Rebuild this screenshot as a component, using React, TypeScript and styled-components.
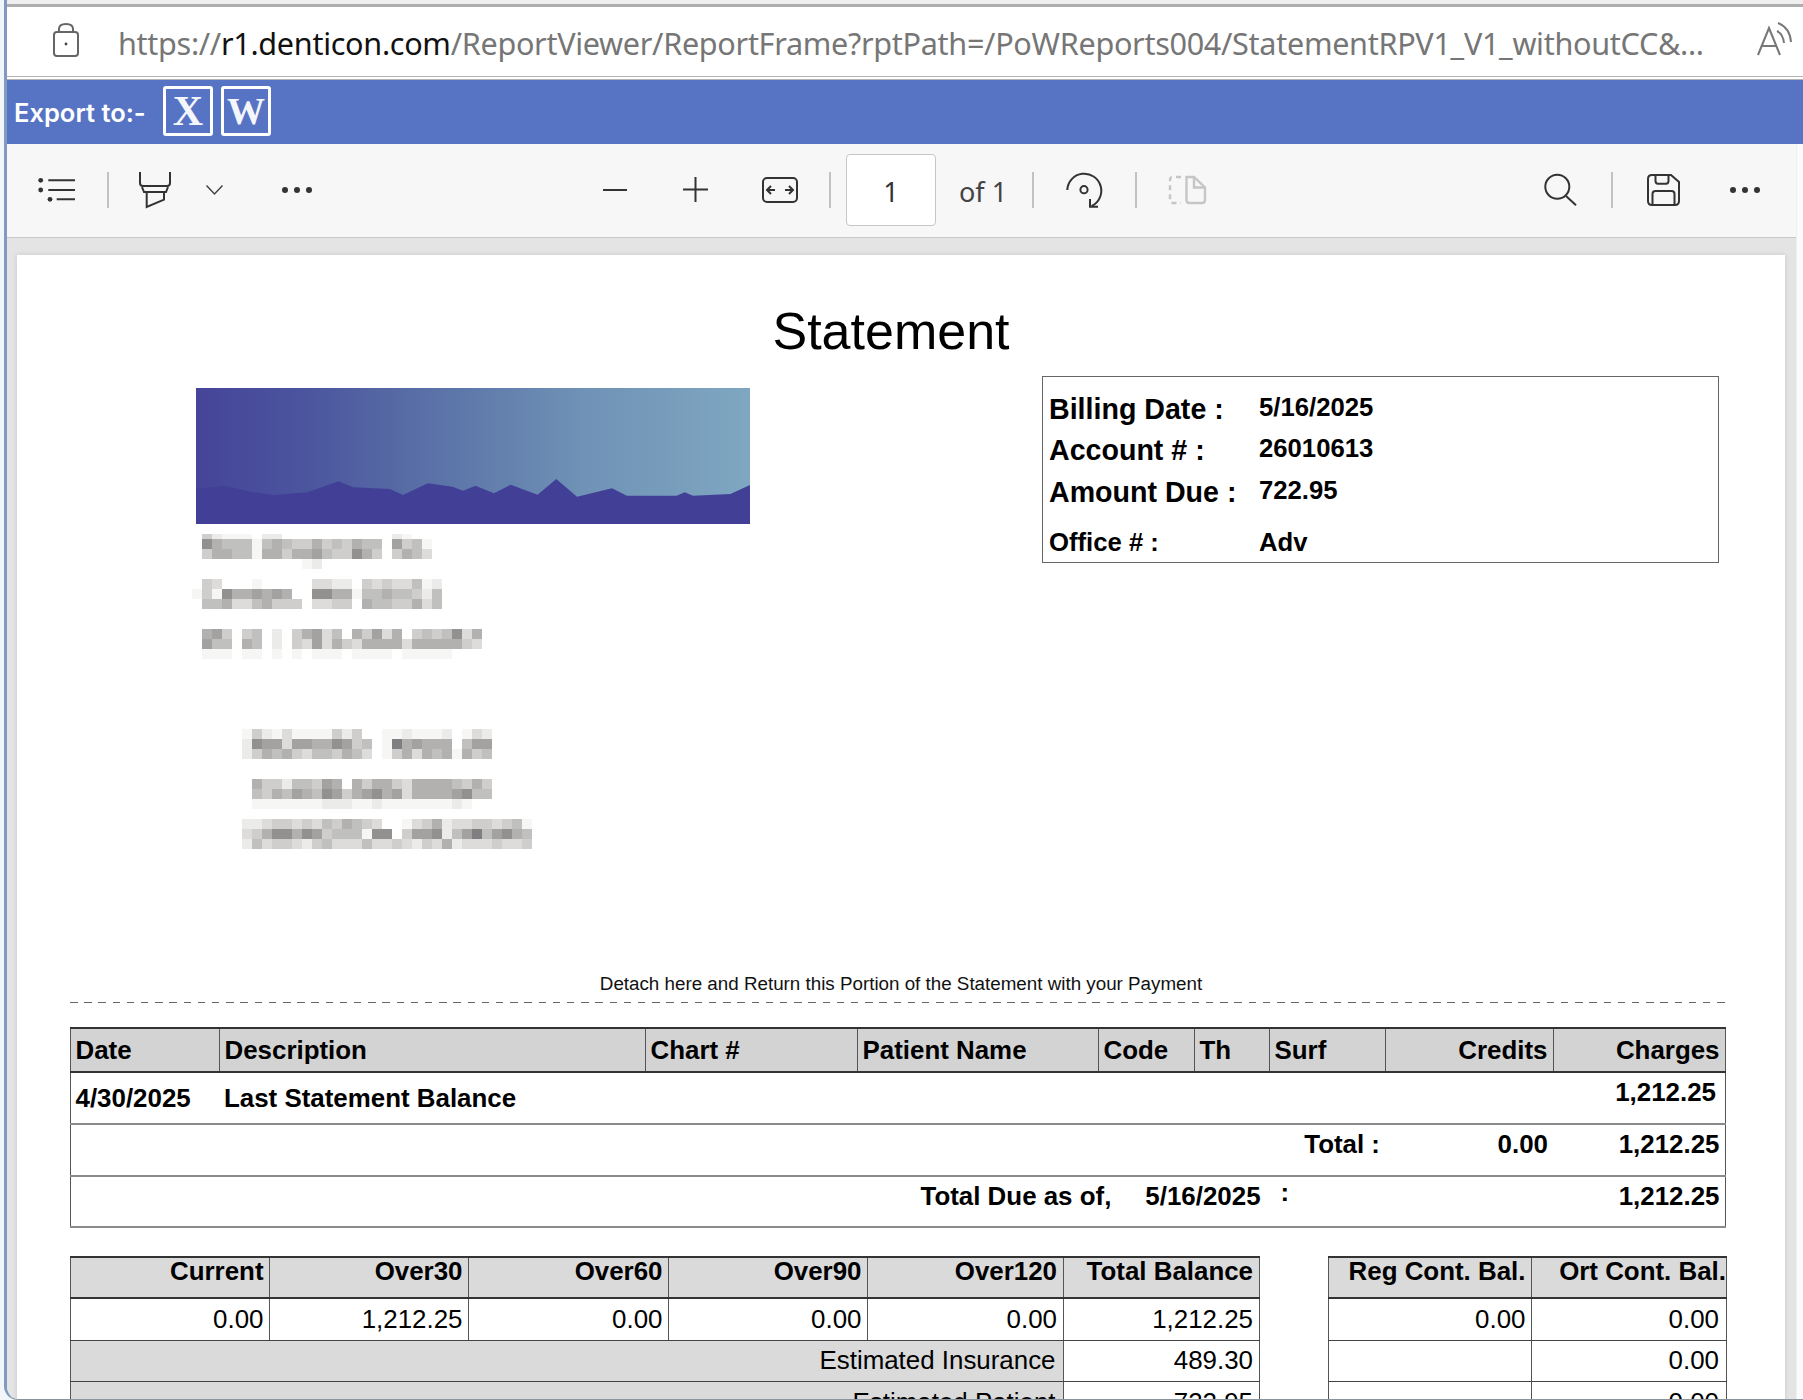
import React from "react";
import styled, { createGlobalStyle } from "styled-components";

const Global = createGlobalStyle`
  html, body { margin: 0; padding: 0; background: #fff; }
  * { box-sizing: border-box; }
`;

const Frame = styled.div`
  width: 1803px; height: 1400px; overflow: hidden;
  background: #f3f6f9; padding-left: 4px;
  font-family: "Liberation Sans", Arial, sans-serif; color: #000;
`;
const Shell = styled.div`
  height: 1400px; display: flex; flex-direction: column; overflow: hidden;
  border-left: 3px solid #7f9bc0; border-bottom: 1px solid #8d959c;
  border-bottom-left-radius: 14px; background: #e4e4e4;
`;
const TopStrip = styled.div`
  flex: none; height: 7px; background: #efefef; border-bottom: 3px solid #aeaeae;
`;
const AddressBar = styled.div`
  flex: none; height: 73px; background: #fff; display: flex; align-items: center;
  padding: 0 0 4px 45px; border-bottom: 4px double #b4b4b4;
`;
const Url = styled.div`
  margin: 6px 0 0 38px; width: 1591px; white-space: nowrap; overflow: hidden;
  font-family: "Noto Sans", sans-serif; font-size: 30.6px; letter-spacing: -0.31px; color: #767676;
  b { font-weight: 400; color: #111; }
`;
const ExportBar = styled.div`
  flex: none; height: 64px; background: #5774c4; display: flex; align-items: center;
  padding-left: 7px;
`;
const ExportLabel = styled.span`
  font-family: Inter, sans-serif; font-weight: 600; font-size: 25.5px;
  color: #fff; width: 149px; white-space: nowrap;
`;
const ExportButton = styled.div`
  width: 50px; height: 50px; margin: 0 8px 3px 0; border: 3.5px solid #fff; border-radius: 3px;
  display: flex; align-items: center; justify-content: center;
  font-family: "Liberation Serif", serif; font-weight: 700; color: #f4f6fc; font-size: ${(p: { $size: number }) => p.$size}px;
  line-height: 1;
`;
const ViewerRow = styled.div`
  flex: 1; min-height: 0; display: flex;
`;
const Viewer = styled.div`
  flex: 1; min-width: 0; display: flex; flex-direction: column;
`;
const ScrollStrip = styled.div`
  flex: none; width: 7px; background: #fbfbfb; border-left: 1px solid #f0f0f0;
`;
const Toolbar = styled.div`
  flex: none; height: 94px; background: #f7f7f7; border-bottom: 1px solid #c8c8c8;
  display: flex; align-items: center;
`;
const Icon = styled.svg<{ $ml: number; $up?: number }>`
  flex: none; display: block; margin-left: ${(p) => p.$ml}px; margin-bottom: ${(p) => p.$up ?? 2}px;
  overflow: visible;
`;
const Sep = styled.div<{ $ml: number }>`
  flex: none; width: 2px; height: 36px; background: #c2c2c2; margin-left: ${(p) => p.$ml}px; margin-bottom: 2px;
`;
const PageInput = styled.div`
  flex: none; width: 90px; height: 72px; margin-left: 15px; margin-bottom: 2px; padding-top: 3px; background: #fff;
  border: 1.5px solid #c6c6c6; border-radius: 4px; display: flex; align-items: center; justify-content: center;
  font-family: "Noto Sans", sans-serif; font-size: 27px; color: #333;
`;
const OfLabel = styled.div`
  flex: none; width: 43px; margin: 2px 0 0 23px; white-space: nowrap;
  font-family: "Noto Sans", sans-serif; font-size: 27px; color: #444;
`;
const Canvas = styled.div`
  flex: 1; min-height: 0; padding: 17px 11px 0 10px; background: #e4e4e4; overflow: hidden;
`;
const Page = styled.div`
  background: #fff; height: 1160px; box-shadow: 0 0 5px rgba(0,0,0,.12); padding-left: 53px;
`;
const Title = styled.h1`
  margin: 0 0 15px -53px; padding: 46px 20px 0 0; font-weight: 400; font-size: 52px; line-height: 60px; text-align: center;
`;
const HeaderRow = styled.div`
  display: flex; align-items: flex-start; padding-left: 126px; height: 597px;
`;
const LeftColumn = styled.div`
  flex: none; width: 554px; padding-top: 12px;
`;
const Logo = styled.svg`
  display: block;
`;
const Peaks = styled.path`
  filter: blur(0.7px);
`;
const Mosaic = styled.svg`
  display: block; margin: 5px 0 0 -4px;
`;
const InfoBox = styled.div`
  flex: none; margin-left: 292px; width: 677px; height: 187px; border: 1px solid #666; padding: 16px 0 0 6px;
`;
const InfoRow = styled.div<{ $h: number }>`
  display: flex; align-items: flex-start; height: ${(p) => p.$h}px; font-weight: 700;
`;
const InfoLabel = styled.div<{ $size: number }>`
  width: 210px; font-size: ${(p) => p.$size}px; line-height: 32px; white-space: nowrap;
`;
const InfoValue = styled.div<{ $lh: number }>`
  font-size: 25.7px; line-height: ${(p) => p.$lh}px;
`;
const Detach = styled.div`
  margin-left: -53px; font-size: 18.8px; line-height: 22px; text-align: center; color: #111;
`;
const Dashes = styled.div`
  width: 1660px; height: 1px; margin-top: 7px;
  background: repeating-linear-gradient(90deg, #666 0 7.5px, transparent 7.5px 14.2px);
`;
const Table = styled.table<{ $w: number }>`
  table-layout: fixed; border-collapse: collapse; width: ${(p) => p.$w}px; font-size: 25.9px; flex: none;
`;
const MainTable = styled(Table)`
  margin-top: 24px;
`;
const Row = styled.tr<{ $h: number }>`
  height: ${(p) => p.$h}px;
`;
type CellProps = { $right?: boolean; $pt?: number; $pr?: number; $bg?: string; $bold?: boolean; $plain?: boolean; $lh?: number };
const Cell = styled.td<CellProps>`
  vertical-align: top; padding: ${(p) => p.$pt ?? 4}px ${(p) => p.$pr ?? 5.5}px 0 4.5px;
  text-align: ${(p) => (p.$right ? "right" : "left")};
  font-weight: ${(p) => (p.$bold ? 700 : 400)};
  line-height: ${(p) => p.$lh ?? 30}px;
  white-space: nowrap;
  background: ${(p) => p.$bg ?? "transparent"};
  border: 1px solid #555;
  border-bottom: ${(p) => (p.$plain ? "2px solid #8a8a8a" : "1px solid #444")};
  border-top: ${(p) => (p.$plain ? "2px solid #8a8a8a" : "1px solid #444")};
`;
const HeadCell = styled(Cell)`
  border-top: 2px solid #333; border-bottom: 2px solid #333;
`;
const TotalDue = styled.div`
  display: flex; align-items: flex-start; padding-left: 845px;
`;
const TotalDate = styled.span`
  margin-left: 34px;
`;
const RaisedColon = styled.span`
  margin-left: 20px; line-height: 22px;
`;
const BalanceRow = styled.div`
  display: flex; align-items: flex-start; gap: 68px; margin-top: 28px;
`;

const Dots = ({ ml }: { ml: number }) => (
  <Icon $ml={ml} width="30" height="6" viewBox="0 0 30 6" fill="#333">
    <circle cx="3" cy="3" r="3" /><circle cx="15" cy="3" r="3" /><circle cx="27" cy="3" r="3" />
  </Icon>
);

const shade: Record<string, string> = {
  ".": "#ffffff", a: "#f6f6f5", b: "#ebebea", c: "#dddcdb", d: "#cfcecd", e: "#c0c0bf",
  f: "#b2b1b0", g: "#a3a2a1", h: "#929190", i: "#7f7f82",
};
const mosaicRows: [number, number, string][] = [
  [534, 5, ".dbaaa.bb...........ba"],
  [539, 10, ".hfeeeaefeddfdedfee.gdea"],
  [549, 10, ".dffeeaffdffgeddhfd.dfec"],
  [559, 10, "...........ab"],
  [579, 10, ".dc...a.....ccbb.dcdcceab"],
  [589, 10, "adahffgfgf..hhffaeefeedbe"],
  [599, 10, ".eefccefddd.ccdd.feeddfce"],
  [629, 10, ".fgd.de.b.dfgce.fdgcf.dedehcf"],
  [639, 10, ".gee.fe.b.dcgcfdcffffcfffffdc"],
  [649, 10, ".aaa.aa.a.a.aaa.aaaa.aaaaa"],
  [729, 10, ".....adbacaaaadbd..aabaaab.acb"],
  [739, 10, ".....bhggcggffhgde.aifgfff.egg"],
  [749, 10, ".....bdfefdceedfec.adfcfefafde"],
  [779, 10, "......fddbeedgf.fdffdcffffedfd"],
  [789, 10, "......edfegfehgdfghfgcffffghee"],
  [799, 10, "......aaaaaaabbbaabaaaaaaaba"],
  [819, 10, ".....bbcddcdcedfedc..acdfbccddcdea"],
  [829, 10, ".....cdfhhfhgdeeeahh.dgghbegieghfe"],
  [839, 10, ".....becddcbdeccceccdcbdcfbcccdccd"],
];

const mountain =
  "M0 136 L0 101 L28.6 97.7 L57.6 104.3 L78 107 L111.5 104.3 L142.6 93.3 L157 99.3 L194 101 L207 107 L231.8 95.3 L256.6 98.7 L267 102.7 L279.4 97.7 L298 105.3 L314.7 96.7 L341.6 106.7 L360.3 91 L381 108.7 L416 100.3 L430.8 107.7 L480.5 107.7 L488.8 104.3 L497 107.7 L534.4 106 L554 97 L554 136 Z";

const mainCols = [149, 426, 212, 241, 96, 75, 116, 168, 172];
const agingCols = [199, 199, 200, 199, 195.5, 196];
const contCols = [203.5, 195];

const gray1 = "#d3d3d3";
const gray2 = "#dadada";

export default function App() {
  return (
    <Frame>
      <Global />
      <Shell>
        <TopStrip />
        <AddressBar>
          <Icon $ml={0} $up={0} width="28" height="34" viewBox="0 0 28 34" fill="none" stroke="#666" strokeWidth="2">
            <rect x="2" y="9" width="24" height="24" rx="3" />
            <path d="M7 9 V6 Q7 1 14 1 Q21 1 21 6 V9" />
            <circle cx="14" cy="21" r="1.4" fill="#444" stroke="none" />
          </Icon>
          <Url>https://<b>r1.denticon.com</b>/ReportViewer/ReportFrame?rptPath=/PoWReports004/StatementRPV1_V1_withoutCC&amp;...</Url>
          <Icon $ml={48} width="36" height="34" viewBox="0 0 36 34" fill="none" stroke="#777" strokeWidth="2">
            <path d="M1 33 L12 6 L23 33 M5 24 H19" />
            <path d="M20 9 Q26 12 27 21" />
            <path d="M21 1 Q33 6 34 20" />
          </Icon>
        </AddressBar>
        <ExportBar>
          <ExportLabel>Export to:-</ExportLabel>
          <ExportButton $size={42}>X</ExportButton>
          <ExportButton $size={38}>W</ExportButton>
        </ExportBar>
        <ViewerRow>
          <Viewer>
            <Toolbar>
              <Icon $ml={31} width="38" height="24" viewBox="0 0 38 24" fill="none" stroke="#333" strokeWidth="2">
                <path d="M10.3 2.3 H37 M10.3 12 H37 M18.7 21.3 H37" />
                <g fill="#333" stroke="none">
                  <circle cx="2.7" cy="2.3" r="2.4" /><circle cx="2.7" cy="12" r="2.4" /><circle cx="12" cy="21.3" r="2.4" />
                </g>
              </Icon>
              <Sep $ml={31} />
              <Icon $ml={30} width="32" height="36" viewBox="0 0 32 36" fill="none" stroke="#333" strokeWidth="2">
                <path d="M1 0 V11 Q1 14 4 14 H28 Q31 14 31 11 V0" />
                <path d="M3 15 L5 20 H27 L29 15" />
                <path d="M7.7 20 V35 L25 27.7 V20" />
              </Icon>
              <Icon $ml={35} width="17" height="10" viewBox="0 0 17 10" fill="none" stroke="#444" strokeWidth="1.5">
                <path d="M0.5 0.5 L8.5 9 L16.5 0.5" />
              </Icon>
              <Dots ml={59} />
              <Icon $ml={291} width="24" height="2" viewBox="0 0 24 2"><rect width="24" height="2" fill="#333" /></Icon>
              <Icon $ml={56} width="25" height="25" viewBox="0 0 25 25" fill="none" stroke="#333" strokeWidth="2">
                <path d="M12.5 0 V25 M0 12.5 H25" />
              </Icon>
              <Icon $ml={54} width="36" height="26" viewBox="0 0 36 26" fill="none" stroke="#333" strokeWidth="2">
                <rect x="1" y="1" width="34" height="24" rx="4" />
                <path d="M13 13 H5.5 M9 9 L5 13 L9 17 M23 13 H30.5 M27 9 L31 13 L27 17" />
              </Icon>
              <Sep $ml={31} />
              <PageInput>1</PageInput>
              <OfLabel>of 1</OfLabel>
              <Sep $ml={30} />
              <Icon $ml={32} width="37" height="36" viewBox="0 0 37 36" fill="none" stroke="#333" strokeWidth="2">
                <path d="M1.3 18 A17 17 0 1 1 25.7 34" />
                <path d="M24 27 V34.7 H32" />
                <circle cx="18" cy="17.7" r="3.6" />
              </Icon>
              <Sep $ml={32} />
              <Icon $ml={32} width="37" height="28" viewBox="0 0 37 28" fill="none" stroke="#c6c6c6" strokeWidth="2.4">
                <path d="M12 1 H4 Q1 1 1 4 V24 Q1 27 4 27 H12" strokeDasharray="5 4" />
                <path d="M17.5 1 H25 L36 11.5 V24 Q36 27 33 27 H20.5 Q17.5 27 17.5 24 Z" />
                <path d="M25 1 V11.5 H36" />
              </Icon>
              <Icon $ml={338} width="33" height="32" viewBox="0 0 33 32" fill="none" stroke="#333" strokeWidth="2">
                <circle cx="13.3" cy="12.7" r="12" />
                <path d="M22 22 L32 31.3" />
              </Icon>
              <Sep $ml={34} />
              <Icon $ml={34} width="33" height="32" viewBox="0 0 33 32" fill="none" stroke="#333" strokeWidth="2">
                <path d="M5 1 H24 L32 8 V27 Q32 31 28 31 H5 Q1 31 1 27 V5 Q1 1 5 1 Z" />
                <path d="M8.5 1 V7 Q8.5 9.7 11 9.7 H19 Q21.5 9.7 21.5 7 V1" />
                <path d="M5.5 31 V20 Q5.5 17 8.5 17 H24.5 Q27.5 17 27.5 20 V31" />
              </Icon>
              <Dots ml={50} />
            </Toolbar>
            <Canvas>
              <Page>
                <Title>Statement</Title>
                <HeaderRow>
                  <LeftColumn>
                    <Logo width="554" height="136" viewBox="0 0 554 136">
                      <defs>
                        <linearGradient id="sky" x1="0" x2="1" y1="0" y2="0">
                          <stop offset="0" stopColor="#464499" />
                          <stop offset="0.2" stopColor="#4b559e" />
                          <stop offset="0.45" stopColor="#5c74a8" />
                          <stop offset="0.7" stopColor="#6f92b6" />
                          <stop offset="1" stopColor="#7fa7c1" />
                        </linearGradient>
                      </defs>
                      <rect width="554" height="136" fill="url(#sky)" />
                      <Peaks d={mountain} fill="#414096" />
                    </Logo>
                    <Mosaic width="720" height="321" viewBox="192 529 720 321" overflow="visible" shapeRendering="crispEdges">
                      {mosaicRows.map(([y, h, cells]) =>
                        cells.split("").map((c, i) =>
                          c === "." ? null : <rect key={`${y}-${i}`} x={192 + i * 10} y={y} width="10" height={h} fill={shade[c]} />
                        )
                      )}
                    </Mosaic>
                  </LeftColumn>
                  <InfoBox>
                    <InfoRow $h={41}><InfoLabel $size={28.6}>Billing Date :</InfoLabel><InfoValue $lh={28}>5/16/2025</InfoValue></InfoRow>
                    <InfoRow $h={42}><InfoLabel $size={28.6}>Account # :</InfoLabel><InfoValue $lh={28}>26010613</InfoValue></InfoRow>
                    <InfoRow $h={50}><InfoLabel $size={28.6}>Amount Due :</InfoLabel><InfoValue $lh={28}>722.95</InfoValue></InfoRow>
                    <InfoRow $h={32}><InfoLabel $size={25.7}>Office # :</InfoLabel><InfoValue $lh={32}>Adv</InfoValue></InfoRow>
                  </InfoBox>
                </HeaderRow>
                <Detach>Detach here and Return this Portion of the Statement with your Payment</Detach>
                <Dashes />
                <MainTable $w={1655}>
                  <colgroup>{mainCols.map((w, i) => <col key={i} width={w} />)}</colgroup>
                  <tbody>
                    <Row $h={44}>
                      {["Date", "Description", "Chart #", "Patient Name", "Code", "Th", "Surf"].map((t) => (
                        <HeadCell key={t} as="th" $bold $bg={gray1} $pt={6}>{t}</HeadCell>
                      ))}
                      <HeadCell as="th" $bold $right $bg={gray1} $pt={6}>Credits</HeadCell>
                      <HeadCell as="th" $bold $right $bg={gray1} $pt={6}>Charges</HeadCell>
                    </Row>
                    <Row $h={52}>
                      <Cell $plain $bold $pt={10} style={{ borderRight: "none" }}>4/30/2025</Cell>
                      <Cell $plain $bold $pt={10} colSpan={7} style={{ borderLeft: "none", borderRight: "none" }}>Last Statement Balance</Cell>
                      <Cell $plain $bold $right $pr={9} $pt={4} style={{ borderLeft: "none" }}>1,212.25</Cell>
                    </Row>
                    <Row $h={52}>
                      <Cell $plain colSpan={6} style={{ borderRight: "none" }} />
                      <Cell $plain $bold $right style={{ borderLeft: "none", borderRight: "none" }}>Total :</Cell>
                      <Cell $plain $bold $right style={{ borderLeft: "none", borderRight: "none" }}>0.00</Cell>
                      <Cell $plain $bold $right style={{ borderLeft: "none" }}>1,212.25</Cell>
                    </Row>
                    <Row $h={51}>
                      <Cell $plain $bold colSpan={8} style={{ borderRight: "none", borderBottom: "2px solid #8a8a8a" }}>
                        <TotalDue>
                          Total Due as of,
                          <TotalDate>5/16/2025</TotalDate>
                          <RaisedColon>:</RaisedColon>
                        </TotalDue>
                      </Cell>
                      <Cell $plain $bold $right style={{ borderLeft: "none" }}>1,212.25</Cell>
                    </Row>
                  </tbody>
                </MainTable>
                <BalanceRow>
                  <Table $w={1188.5}>
                    <colgroup>{agingCols.map((w, i) => <col key={i} width={w} />)}</colgroup>
                    <tbody>
                      <Row $h={41}>
                        {["Current", "Over30", "Over60", "Over90", "Over120", "Total Balance"].map((t) => (
                          <HeadCell key={t} as="th" $bold $right $bg={gray2} $pt={0} $lh={26}>{t}</HeadCell>
                        ))}
                      </Row>
                      <Row $h={42}>
                        {["0.00", "1,212.25", "0.00", "0.00", "0.00", "1,212.25"].map((t, i) => (
                          <Cell key={i} $right $pt={7} $lh={26}>{t}</Cell>
                        ))}
                      </Row>
                      <Row $h={41}>
                        <Cell colSpan={5} $right $bg={gray2} $pt={6} $lh={26} $pr={7}>Estimated Insurance</Cell>
                        <Cell $right $pt={6} $lh={26}>489.30</Cell>
                      </Row>
                      <Row $h={41}>
                        <Cell colSpan={5} $right $bg={gray2} $pt={7} $lh={26} $pr={7}>Estimated Patient</Cell>
                        <Cell $right $pt={7} $lh={26}>722.95</Cell>
                      </Row>
                    </tbody>
                  </Table>
                  <Table $w={398.5}>
                    <colgroup>{contCols.map((w, i) => <col key={i} width={w} />)}</colgroup>
                    <tbody>
                      <Row $h={41}>
                        <HeadCell as="th" $bold $right $bg={gray2} $pt={0} $lh={26}>Reg Cont. Bal.</HeadCell>
                        <HeadCell as="th" $bold $right $bg={gray2} $pt={0} $pr={0} $lh={26}>Ort Cont. Bal.</HeadCell>
                      </Row>
                      <Row $h={42}>
                        <Cell $right $pt={7} $lh={26}>0.00</Cell>
                        <Cell $right $pt={7} $pr={7} $lh={26}>0.00</Cell>
                      </Row>
                      <Row $h={41}>
                        <Cell />
                        <Cell $right $pt={6} $pr={7} $lh={26}>0.00</Cell>
                      </Row>
                      <Row $h={41}>
                        <Cell />
                        <Cell $right $pt={7} $pr={7} $lh={26}>0.00</Cell>
                      </Row>
                    </tbody>
                  </Table>
                </BalanceRow>
              </Page>
            </Canvas>
          </Viewer>
          <ScrollStrip />
        </ViewerRow>
      </Shell>
    </Frame>
  );
}
